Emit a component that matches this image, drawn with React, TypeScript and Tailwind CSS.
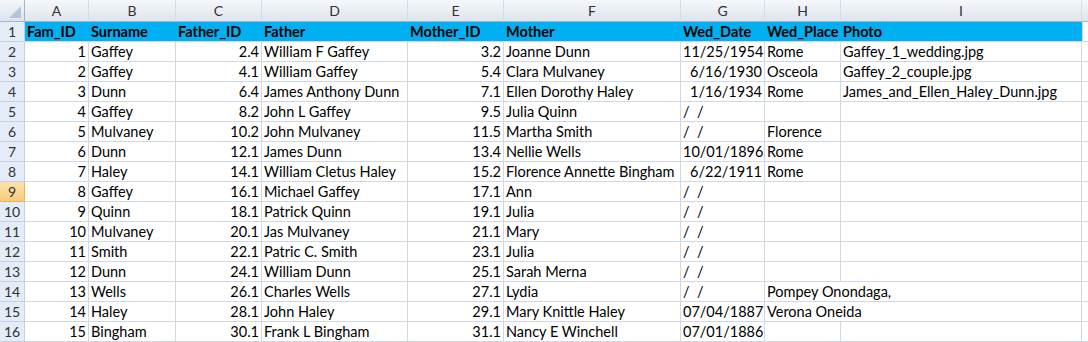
import React from "react";

type Align = "l" | "r";

const cols = ["A", "B", "C", "D", "E", "F", "G", "H", "I"];
const widths = [64, 87, 86, 146, 96, 177, 84, 76, 241];

// numeric columns are right aligned
const numCols = [0, 2, 4];

const header = ["Fam_ID", "Surname", "Father_ID", "Father", "Mother_ID", "Mother", "Wed_Date", "Wed_Place", "Photo"];

const NO_DATE = "/\u00a0 /";

const rows: string[][] = [
  ["1", "Gaffey", "2.4", "William F Gaffey", "3.2", "Joanne Dunn", "11/25/1954", "Rome", "Gaffey_1_wedding.jpg"],
  ["2", "Gaffey", "4.1", "William Gaffey", "5.4", "Clara Mulvaney", "6/16/1930", "Osceola", "Gaffey_2_couple.jpg"],
  ["3", "Dunn", "6.4", "James Anthony Dunn", "7.1", "Ellen Dorothy Haley", "1/16/1934", "Rome", "James_and_Ellen_Haley_Dunn.jpg"],
  ["4", "Gaffey", "8.2", "John L Gaffey", "9.5", "Julia Quinn", NO_DATE, "", ""],
  ["5", "Mulvaney", "10.2", "John Mulvaney", "11.5", "Martha Smith", NO_DATE, "Florence", ""],
  ["6", "Dunn", "12.1", "James Dunn", "13.4", "Nellie Wells", "10/01/1896", "Rome", ""],
  ["7", "Haley", "14.1", "William Cletus Haley", "15.2", "Florence Annette Bingham", "6/22/1911", "Rome", ""],
  ["8", "Gaffey", "16.1", "Michael Gaffey", "17.1", "Ann", NO_DATE, "", ""],
  ["9", "Quinn", "18.1", "Patrick Quinn", "19.1", "Julia", NO_DATE, "", ""],
  ["10", "Mulvaney", "20.1", "Jas Mulvaney", "21.1", "Mary", NO_DATE, "", ""],
  ["11", "Smith", "22.1", "Patric C. Smith", "23.1", "Julia", NO_DATE, "", ""],
  ["12", "Dunn", "24.1", "William Dunn", "25.1", "Sarah Merna", NO_DATE, "", ""],
  ["13", "Wells", "26.1", "Charles Wells", "27.1", "Lydia", NO_DATE, "Pompey Onondaga,", ""],
  ["14", "Haley", "28.1", "John Haley", "29.1", "Mary Knittle Haley", "07/04/1887", "Verona Oneida", ""],
  ["15", "Bingham", "30.1", "Frank L Bingham", "31.1", "Nancy E Winchell", "07/01/1886", "", ""],
];

// real dates are right aligned; text-typed ones sit left
const alignOf = (ci: number, v: string): Align => {
  if (numCols.includes(ci)) return "r";
  if (ci === 6 && /^\d{1,2}\/\d{2}\/\d{4}$/.test(v) && !v.startsWith("0") && !v.startsWith("10/")) return "r";
  return "l";
};

const Corner = () => (
  <div className="relative h-[22px] w-[25px] shrink-0 border-r border-b border-[#9eb6ce] bg-gradient-to-b from-[#f3f6fa] to-[#dde4ee]">
    <svg className="absolute right-[3px] bottom-[3px]" width="12" height="12" viewBox="0 0 12 12">
      <polygon points="12,0 12,12 0,12" fill="#b5c4d8" />
    </svg>
  </div>
);

const RowHead = ({ n, selected }: { n: number; selected?: boolean }) => (
  <div
    className={
      "flex h-[20px] w-[25px] shrink-0 items-center justify-center border-r border-b text-[14px] " +
      (selected
        ? "border-[#f2b150] bg-gradient-to-b from-[#fbe2ad] to-[#f7cb7c] text-[#333]"
        : "border-[#c5d1e0] bg-[#e4ecf7] text-[#333]")
    }
  >
    {n}
  </div>
);

export default function App() {
  return (
    <div
      className="h-[342px] w-[1088px] overflow-hidden bg-white text-black"
      style={{ fontFamily: "Lato, 'Open Sans', sans-serif" }}
    >
      {/* column letters */}
      <div className="flex">
        <Corner />
        {cols.map((c, i) => (
          <div
            key={c}
            style={{ width: widths[i] }}
            className="flex h-[22px] shrink-0 items-center justify-center border-r border-b border-r-[#d5dce6] border-b-[#9eb6ce] bg-gradient-to-b from-[#f5f7fa] to-[#dfe5ee] text-[14px] text-[#333]"
          >
            {c}
          </div>
        ))}
        <div className="h-[22px] flex-1 border-b border-[#9eb6ce] bg-gradient-to-b from-[#f5f7fa] to-[#dfe5ee]" />
      </div>

      {/* header row */}
      <div className="flex">
        <RowHead n={1} />
        <div className="flex h-[20px] w-[1058px] shrink-0 items-end border-r border-b border-r-[#d0d7e5] border-b-[#d0d7e5] bg-[#00b0f0] text-[14.5px] font-bold">
          {header.map((h, i) => (
            <div
              key={h}
              style={{ width: widths[i] }}
              className="h-[19px] shrink-0 whitespace-nowrap px-[2px] text-left leading-[19px]"
            >
              {h}
            </div>
          ))}
        </div>
        <div className="h-[20px] flex-1 border-b border-[#d0d7e5]" />
      </div>

      {rows.map((r, ri) => (
        <div key={ri} className="flex">
          <RowHead n={ri + 2} selected={ri + 2 === 9} />
          {r.map((v, ci) => {
            const overflow = ci === 7 && v.length > 9;
            return (
              <div
                key={ci}
                style={{ width: widths[ci] }}
                className={
                  "h-[20px] shrink-0 whitespace-nowrap border-b border-[#d0d7e5] px-[2px] text-[14.5px] leading-[20px] " +
                  (overflow ? "overflow-visible " : "overflow-hidden border-r ") +
                  (alignOf(ci, v) === "r" ? "text-right" : "text-left")
                }
              >
                {v}
              </div>
            );
          })}
          <div className="h-[20px] flex-1 border-b border-[#d0d7e5]" />
        </div>
      ))}
    </div>
  );
}
